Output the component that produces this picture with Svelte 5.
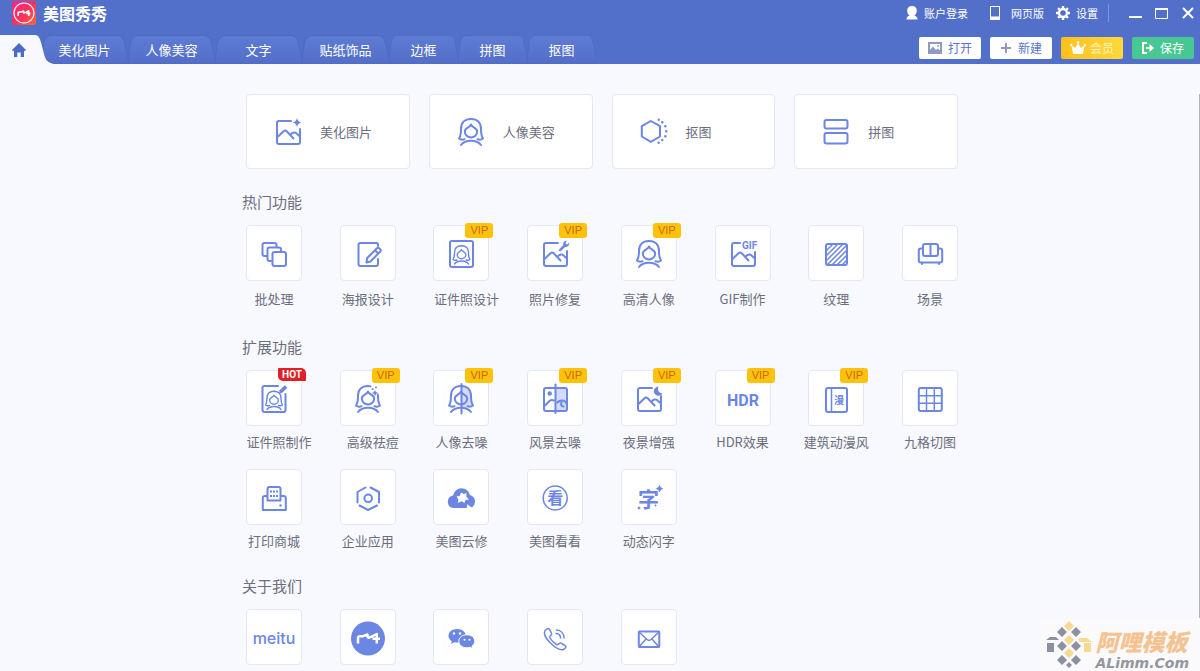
<script>
  const tabs = [
    { label: '美化图片', wide: true },
    { label: '人像美容', wide: true },
    { label: '文字', wide: true },
    { label: '贴纸饰品', wide: true },
    { label: '边框' },
    { label: '拼图' },
    { label: '抠图' }
  ];

  const cards = [
    { label: '美化图片', icon: 'beautify' },
    { label: '人像美容', icon: 'portrait' },
    { label: '抠图', icon: 'cutout' },
    { label: '拼图', icon: 'collage' }
  ];

  const sections = [
    {
      title: '热门功能',
      kind: 'hot',
      items: [
        { label: '批处理', icon: 'batch' },
        { label: '海报设计', icon: 'poster' },
        { label: '证件照设计', icon: 'idphoto', badge: 'VIP', trailing: true },
        { label: '照片修复', icon: 'repair', badge: 'VIP' },
        { label: '高清人像', icon: 'portrait', badge: 'VIP' },
        { label: 'GIF制作', icon: 'gif' },
        { label: '纹理', icon: 'texture' },
        { label: '场景', icon: 'sofa' }
      ]
    },
    {
      title: '扩展功能',
      kind: 'more',
      items: [
        { label: '证件照制作', icon: 'idmake', badge: 'HOT', trailing: true },
        { label: '高级祛痘', icon: 'acne', badge: 'VIP', trailing: true },
        { label: '人像去噪', icon: 'denoise', badge: 'VIP' },
        { label: '风景去噪', icon: 'scenery', badge: 'VIP' },
        { label: '夜景增强', icon: 'night', badge: 'VIP' },
        { label: 'HDR效果', icon: 'hdr', badge: 'VIP' },
        { label: '建筑动漫风', icon: 'comic', badge: 'VIP' },
        { label: '九格切图', icon: 'grid' },
        { label: '打印商城', icon: 'printer' },
        { label: '企业应用', icon: 'company' },
        { label: '美图云修', icon: 'cloud' },
        { label: '美图看看', icon: 'kankan' },
        { label: '动态闪字', icon: 'flash' }
      ]
    }
  ];

  const about = ['meitu', 'logo', 'wechat', 'phone', 'mail'];

  // shapes shared by several icons
  const hairLeft = 'M16 4C9.500 4 6 8 6 14C6 19 5.800 21 4 23.500C5.500 24.700 7.500 24.900 9.500 24.300';
  const hairRight = 'M16 4C22.500 4 26 8 26 14C26 19 26.200 21 28 23.500C26.500 24.700 24.500 24.900 22.500 24.300';
  const face = 'M16 9.500C15.500 12.500 9.800 12.500 9.800 16.500C9.800 20 12.700 22.500 16 22.500C19.300 22.500 22.200 20 22.200 16.500C22.200 12.500 16.500 12.500 16 9.500Z';
  const shoulders = 'M6 30C8 27.300 12 25.800 16 25.800C20 25.800 24 27.300 26 30';
  const hills = 'M5 22.500L11.500 16.200C12.600 15.200 13.700 15.200 14.700 16.200L21.500 23.500M18.500 19.800C20.500 17 23.500 16.800 25 18.800C26 20 26.500 21 27.700 21';
  const frame = 'M19 6H7Q5 6 5 8V27Q5 29 7 29H26Q28 29 28 27V14';
  const mark = 'M6 22.500V17Q6 15.200 7.800 15.200H11L15.500 13.500V15.500Q15.500 17 17 16.500L20 15.500L24.800 13V22.500M20.500 17.800H28';
</script>

{#snippet icon(name)}
  <svg class="icon" width="32" height="32" viewBox="0 0 32 32" aria-hidden="true">
    {#if name === 'beautify'}
      <path d={frame} />
      <path d={hills} />
      <path class="solid" d="M25 3Q25.800 6.700 29.500 7.500Q25.800 8.300 25 12Q24.200 8.300 20.500 7.500Q24.200 6.700 25 3Z" />
    {:else if name === 'portrait'}
      <path d={hairLeft} />
      <path d={hairRight} />
      <path d={face} />
      <path d={shoulders} />
    {:else if name === 'cutout'}
      <path d="M12.800 6L22 11.200V21.500L12.800 26.800L3.800 21.500V11.200Z" />
      {#each [[20.7, 4.7], [24.3, 7.3], [27.3, 11.2], [28.2, 16.2], [27.3, 21.2], [24.3, 25], [20.7, 27.7]] as [x, y]}
        <circle class="solid" cx={x} cy={y} r="1.200" />
      {/each}
    {:else if name === 'collage'}
      <rect x="4.500" y="5" width="23" height="8.500" rx="2" />
      <rect x="4.500" y="18" width="23" height="10.500" rx="2" />
    {:else if name === 'batch'}
      <path d="M9 19H6.500Q4.500 19 4.500 17V8Q4.500 6 6.500 6H16.500Q18.500 6 18.500 8V10" />
      <path d="M14 24H11.500Q9.500 24 9.500 22V12.500Q9.500 10.500 11.500 10.500H21Q23 10.500 23 12.500V14.500" />
      <rect x="14.500" y="15" width="13.500" height="14" rx="2" />
    {:else if name === 'poster'}
      <path d="M26 9V7.500Q26 6 24.500 6H8.500Q6.500 6 6.500 8V27Q6.500 29 8.500 29H24Q26 29 26 27V22" />
      <path d="M14.500 25.500L15.200 21L25 11.200Q26.200 10.200 27.500 11.400L28.200 12.200Q29.300 13.400 28.200 14.600L18.500 24.500ZM23 13.200L26.300 16.500" />
    {:else if name === 'idphoto'}
      <rect x="5" y="4" width="23" height="26" rx="2" />
      <g transform="translate(5.300 6) scale(.7)">
        <path d={hairLeft} />
        <path d={hairRight} />
        <path d={face} />
        <path d={shoulders} />
      </g>
    {:else if name === 'repair'}
      <path d={frame} />
      <path d={hills} />
      <path class="solid" d="M20 12.500L24.300 8C23.700 6 25.300 3.800 27.600 3.500L26.500 6.500L28 7.600L30.300 5.800C30.500 8.500 28.200 10.600 26 10L22 14C20.600 14.700 19.300 13.600 20 12.500Z" />
    {:else if name === 'gif'}
      <path d="M13 6H7Q5 6 5 8V27Q5 29 7 29H26Q28 29 28 27V15" />
      <path d={hills} />
      <text class="gif" x="15" y="12">GIF</text>
    {:else if name === 'texture'}
      <rect x="6" y="7" width="21" height="21" rx="2" />
      <path class="thin" d="M7 13L12 8M7 18L17 8M7 23L22 8M7 28L27 8M12 28L27 13M17 28L27 18M22 28L27 23" />
    {:else if name === 'sofa'}
      <rect x="9" y="7" width="15" height="12" rx="2" />
      <path d="M16.500 7V19M9 11.500H7Q4.800 11.500 4.800 13.700V23.500Q4.800 25.500 6.800 25.500H26.200Q28.200 25.500 28.200 23.500V13.700Q28.200 11.500 26 11.500H24M8 25.500V27M25 25.500V27" />
    {:else if name === 'idmake'}
      <path d="M20 4H6.500Q4.500 4 4.500 6V28Q4.500 30 6.500 30H25.500Q27.500 30 27.500 28V12" />
      <path class="solid" d="M21 11.500L21.600 8.300L26.800 3.300L29.300 5.700L24.200 10.800Z" />
      <g transform="translate(4.800 6.500) scale(.7)">
        <path d={hairLeft} />
        <path d={hairRight} />
        <path d={face} />
        <path d={shoulders} />
      </g>
    {:else if name === 'acne'}
      <path d={hairLeft} />
      <path d="M16 4Q17.500 4 18.500 4.400M25.800 12.500Q26 13.300 26 14C26 19 26.200 21 28 23.500C26.500 24.700 24.500 24.900 22.500 24.300" />
      <path d={face} />
      <path d={shoulders} />
      <path class="solid" d="M23 8Q23.500 10.500 26 11Q23.500 11.500 23 14Q22.500 11.500 20 11Q22.500 10.500 23 8Z" />
      <circle class="solid" cx="20.500" cy="7" r="1" />
      <circle class="solid" cx="24" cy="5.500" r="1" />
    {:else if name === 'denoise'}
      <path class="tint" d="M16 4C23 4 26 9 26 14C26 19 26.200 21 28 23.500L22 25L26 30L16 26Z" />
      <path d={hairLeft} />
      <path d={hairRight} />
      <path d={face} />
      <path d={shoulders} />
      <path d="M16.500 2V31.500" />
    {:else if name === 'scenery'}
      <path class="tint" d="M16.500 6H26Q28 6 28 8V27Q28 29 26 29H16.500Z" />
      <rect x="5" y="6" width="23" height="23" rx="2" />
      <circle class="solid" cx="10.700" cy="11.500" r="2.200" />
      <path d="M5 24.500L10.500 19Q12.500 17.500 15 18.500M28 22.500C26.500 17.500 21 17.500 18.500 20.500M22.500 20.500Q21 24 24.500 24.500" />
      <path d="M16.500 2.500V31" />
    {:else if name === 'night'}
      <path d={frame} />
      <path d={hills} />
      <path class="solid" d="M25.500 4.500C24 8 25.800 11.200 29.500 11.500C28 14.200 23.800 14.600 21.800 12C19.600 9 21.500 5 25.500 4.500Z" />
    {:else if name === 'hdr'}
      <text class="hdr" x="16" y="24" text-anchor="middle">HDR</text>
    {:else if name === 'comic'}
      <rect x="6" y="6" width="21" height="24" rx="2" />
      <path class="thin" d="M11.500 6V30" />
      <text class="comic" x="19" y="22" text-anchor="middle">漫</text>
    {:else if name === 'grid'}
      <rect x="4.800" y="6" width="23" height="23" rx="2" />
      <path class="thin" d="M12.500 6V29M20.300 6V29M5 13.700H28M5 21.300H28" />
    {:else if name === 'printer'}
      <path d="M9.500 19.500V8Q9.500 6 11.500 6H20.500Q22.500 6 22.500 8V19.500ZM9.500 15H7Q4.800 15 4.800 17V29H27.800V17Q27.800 15 25.500 15H22.500" />
      <path class="dash" d="M12 10.500H20.500M12 15H20.500" />
      <circle class="solid" cx="22.500" cy="24.500" r="1.200" />
    {:else if name === 'company'}
      <path d="M13.500 6.500L5.500 11V21.500M18.500 6.500L27 11V21.500M7.500 24.500L16 29L25 24.500" />
      <circle cx="16.200" cy="17.300" r="3.800" />
    {:else if name === 'cloud'}
      <path class="solid" d="M8.500 27Q2.800 26.500 2.800 20.700Q3 15.500 8 14.500Q10 7.500 16.500 7.300Q23 7.500 25 14Q30 15.500 30 20.500Q30 24 27 26.500Q24.500 25.500 22.500 23L21.500 27Z" />
      <path class="white" d="M16 11.500L19 13L21.500 12L21.300 15.500L24 18.500L20.500 19L19.500 22L16.800 20.300L13 21.800L13.300 18.300L11.500 15.500L14.800 14.800Z" />
    {:else if name === 'kankan'}
      <circle class="thin" cx="16.200" cy="17" r="12" />
      <text class="kankan" x="16.200" y="23" text-anchor="middle">看</text>
    {:else if name === 'flash'}
      <text class="flash" x="15.500" y="26" text-anchor="middle">字</text>
      <path class="solid" d="M26.500 4Q27.300 6.900 30.200 7.700Q27.300 8.500 26.500 11.400Q25.700 8.500 22.800 7.700Q25.700 6.900 26.500 4ZM6 25Q6.400 26.600 8 27Q6.400 27.400 6 29Q5.600 27.400 4 27Q5.600 26.600 6 25ZM22.500 23Q22.800 24.200 24 24.500Q22.800 24.800 22.500 26Q22.200 24.800 21 24.500Q22.200 24.200 22.500 23Z" />
    {:else if name === 'meitu'}
      <text class="meitu" x="16" y="23" text-anchor="middle">meitu</text>
    {:else if name === 'logo'}
      <circle class="solid" cx="16" cy="17.500" r="17" />
      <path class="stroke-white" d={mark} />
    {:else if name === 'wechat'}
      <path class="solid" d="M12 8C6.800 8 3.500 11 3.500 14.700C3.500 17 4.600 18.800 6.700 20.200L6.200 23L9.200 21.200Q10.500 21.600 12.500 21.600C17.500 21.600 20.700 18.500 20.700 14.700C20.700 11 17.200 8 12 8Z" />
      <path class="bubble" d="M22 13.700C17.200 13.700 13.800 16.500 13.800 20.200C13.800 24 17.200 26.700 21.800 26.700Q23.600 26.700 25 26.200L27.500 27.700L27 25.200C28.700 24 29.700 22.300 29.700 20.200C29.700 16.500 26.500 13.700 22 13.700Z" />
      <circle class="white" cx="9" cy="12.500" r="1.200" />
      <circle class="white" cx="15" cy="12.500" r="1.200" />
      <circle class="white" cx="19.500" cy="18.700" r="1" />
      <circle class="white" cx="24.500" cy="18.700" r="1" />
    {:else if name === 'phone'}
      <path class="thin" d="M6 9.500L8.200 7.800Q9.500 7 10.500 8.300L12.500 12Q13 13.200 12 14.200L11 15.200Q10.500 16 11 17C12.700 20 14.700 22 17.500 23.500Q18.500 23.900 19.300 23.200L20.500 22.300Q21.500 21.700 22.500 22.300L26 24.500Q27.500 25.500 26.500 26.800L25 28.300C19 31 2.500 16.500 6 9.500ZM17.500 9C22 9.200 25 12.500 25 17M17 12.500C19.800 12.700 21.500 14.500 21.500 17" />
    {:else if name === 'mail'}
      <rect x="5.800" y="10.500" width="20.500" height="15.500" rx="1" />
      <path class="thin" d="M6 11L14 18.500Q16 20.200 18 18.500L26 11M6 26L13 18M26 26L19 18" />
    {/if}
  </svg>
{/snippet}

{#snippet tile(item)}
  <button class="tile" aria-label={item.label}>
    {@render icon(item.icon)}
    {#if item.badge}
      <span class="badge" class:hot={item.badge === 'HOT'}>{item.badge}</span>
    {/if}
  </button>
{/snippet}

<div class="app">
  <header>
    <div class="titlebar">
      <div class="brand">
        <svg width="24" height="24" viewBox="0 0 24 24" aria-hidden="true">
          <defs>
            <linearGradient id="brandFill" x1="0" y1="0" x2="1" y2="1">
              <stop offset="0" stop-color="#f5288c" />
              <stop offset=".5" stop-color="#fb2f5c" />
              <stop offset="1" stop-color="#ff6a3c" />
            </linearGradient>
          </defs>
          <rect width="24" height="24" rx="3" fill="url(#brandFill)" />
          <circle cx="12" cy="12" r="10" fill="none" stroke="#fff" stroke-width="1.200" />
          <path transform="translate(2.800 2.500) scale(.56)" d={mark} fill="none" stroke="#fff" stroke-width="3" stroke-linejoin="round" />
        </svg>
        <strong>美图秀秀</strong>
      </div>

      <nav class="account">
        <button class="plain login">
          <svg width="12" height="14" viewBox="0 0 12 14" aria-hidden="true">
            <path fill="#fff" d="M6 0C9 0 10.800 2 10.800 4.800C10.800 7 9.800 8.700 8.300 9.500Q11.500 10.300 11.500 13.500H.5Q.5 10.300 3.700 9.500C2.200 8.700 1.200 7 1.200 4.800C1.200 2 3 0 6 0Z" />
          </svg>
          账户登录
        </button>
        <button class="plain web">
          <svg width="10" height="14" viewBox="0 0 10 14" aria-hidden="true">
            <path fill="#fff" fill-rule="evenodd" d="M0 0H10V14H0ZM1 1V10.500H9V1Z" />
          </svg>
          网页版
        </button>
        <button class="plain">
          <svg width="14" height="14" viewBox="0 0 14 14" aria-hidden="true">
            <circle cx="7" cy="7" r="4" fill="none" stroke="#fff" stroke-width="2.400" />
            <path stroke="#fff" stroke-width="2.400" d="M7 0V2M7 12V14M0 7H2M12 7H14M2.050 2.050L3.500 3.500M10.500 10.500L11.950 11.950M2.050 11.950L3.500 10.500M10.500 3.500L11.950 2.050" />
          </svg>
          设置
        </button>
        <span class="divider"></span>
        <div class="window">
          <button class="plain" aria-label="最小化">
            <svg width="14" height="14" viewBox="0 0 14 14"><path d="M0 11H13" stroke="#fff" stroke-width="2" /></svg>
          </button>
          <button class="plain" aria-label="最大化">
            <svg width="14" height="14" viewBox="0 0 14 14"><path d="M.5 3V12.500H12.500V3Z" fill="none" stroke="#fff" /><path d="M0 3H13" stroke="#fff" stroke-width="2" /></svg>
          </button>
          <button class="plain" aria-label="关闭">
            <svg width="14" height="14" viewBox="0 0 14 14"><path d="M2 2L12 12M12 2L2 12" stroke="#fff" stroke-width="2" /></svg>
          </button>
        </div>
      </nav>
    </div>

    <div class="toolbar">
      <nav class="tabs">
        <button class="home" aria-label="首页" aria-current="page">
          <svg class="shape" viewBox="0 0 54 29" preserveAspectRatio="none" aria-hidden="true">
            <path fill="#f8f9fe" d="M0 0H35C39 0 40 4 41.500 9L44 19C45.500 25 48 28 54 29H0Z" />
          </svg>
          <svg class="house" width="14" height="14" viewBox="0 0 14 14" aria-hidden="true">
            <path fill="#4c6ac6" d="M7 0L14 7L13 8.200L12 7.500V14H8.700V9.500H5.300V14H2V7.500L1 8.200L0 7Z" />
          </svg>
        </button>
        {#each tabs as tab}
          <button class="tab" class:wide={tab.wide}>
            <svg class="shape" viewBox="0 0 86 29" preserveAspectRatio="none" aria-hidden="true">
              <defs>
                <linearGradient id="tabFill" x1="0" y1="0" x2="0" y2="1">
                  <stop offset="0" stop-color="#5f7cd5" />
                  <stop offset="1" stop-color="#526ec7" />
                </linearGradient>
              </defs>
              <path fill="url(#tabFill)" stroke="#4f6bc2" stroke-width="1" d="M0 29Q1 17 2.500 8Q4 1 10 .5H76Q81 1 82.500 8L85 19Q86 25 88 29Z" />
            </svg>
            <span>{tab.label}</span>
          </button>
        {/each}
      </nav>

      <div class="actions">
        <button class="action">
          <svg width="14" height="12" viewBox="0 0 14 12" aria-hidden="true">
            <rect x="1" y="1" width="12" height="10" fill="none" stroke="#8f9ac0" stroke-width="2" />
            <path fill="#8f9ac0" d="M2 10V8L5 4.500L8 8L10 6.500L12 8.500V10Z" />
            <circle cx="10" cy="4" r="1" fill="#8f9ac0" />
          </svg>
          打开
        </button>
        <button class="action">
          <svg width="12" height="12" viewBox="0 0 12 12" aria-hidden="true">
            <path d="M6 1V11M1 6H11" stroke="#8f9ac0" stroke-width="2" />
          </svg>
          新建
        </button>
        <button class="action vip">
          <svg width="16" height="14" viewBox="0 0 16 14" aria-hidden="true">
            <path fill="#fff" d="M1.500 4.500L5 7L8 2L11 7L14.500 4.500L13 13H3Z" />
            <circle cx="8" cy="1.500" r="1.300" fill="#fff" />
            <circle cx="1.200" cy="4" r="1.200" fill="#fff" />
            <circle cx="14.800" cy="4" r="1.200" fill="#fff" />
          </svg>
          会员
        </button>
        <button class="action save">
          <svg width="12" height="12" viewBox="0 0 12 12" aria-hidden="true">
            <path fill="none" stroke="#fff" stroke-width="2" d="M5 1H1V11H5" />
            <path fill="#fff" d="M4 5H7.500V2L12 6L7.500 10V7H4Z" />
          </svg>
          保存
        </button>
      </div>
    </div>
  </header>

  <main>
    <div class="cards">
      {#each cards as card}
        <button class="card">
          {@render icon(card.icon)}
          <span>{card.label}</span>
        </button>
      {/each}
    </div>

    {#each sections as section}
      <section class={section.kind}>
        <h2>{section.title}</h2>
        <div class="tiles">
          {#each section.items as item}
            <div class="cell">
              {@render tile(item)}
              <span class="label" class:trailing={item.trailing}>{item.label}</span>
            </div>
          {/each}
        </div>
      </section>
    {/each}

    <section>
      <h2>关于我们</h2>
      <div class="tiles">
        {#each about as name}
          {@render tile({ label: name, icon: name })}
        {/each}
      </div>
    </section>
  </main>

  <span class="scroll"></span>

  <div class="watermark">
    <svg width="48" height="50" viewBox="0 0 48 50" aria-hidden="true">
      <g fill="#f8d98f">
        <path d="M24 1L29 6L24 11L19 6ZM24 15L29 20L24 25L19 20ZM24 28L29 33L24 38L19 33Z" />
        <path d="M34 18H42L47 22H34ZM39 23H46V32H39Z" />
      </g>
      <g fill="#8c919f">
        <path d="M17 7L22 12L17 17L12 12ZM31 7L36 12L31 17L26 12ZM17 21L22 26L17 31L12 26ZM31 21L36 26L31 31L26 26ZM17 35L22 40L17 45L12 40ZM31 35L36 40L31 45L26 40ZM24 42L27 45L24 48L21 45Z" />
        <path d="M1 20L5 17H11L14 20ZM2 23H9V32H2Z" />
      </g>
    </svg>
    <div class="mark-text">
      <b>阿哩模板</b>
      <i>ALimm.Com</i>
    </div>
  </div>
</div>

<style>
  :global(body) {
    margin: 0;
    background: #f8f9fe;
  }

  .app {
    position: relative;
    min-height: 100vh;
    box-sizing: border-box;
    overflow: hidden;
    font-family: "Noto Sans CJK SC", sans-serif;
    font-size: 13px;
    color: #6b6e7d;
  }

  button {
    margin: 0;
    padding: 0;
    border: 0;
    background: none;
    font: inherit;
    color: inherit;
    cursor: pointer;
  }

  svg {
    display: block;
    flex: none;
  }

  header {
    background: #5270ca;
    color: #fff;
  }

  .titlebar {
    display: flex;
    justify-content: space-between;
    align-items: center;
    height: 26px;
    padding: 0 5px 0 12px;
  }

  .brand {
    display: flex;
    align-items: center;
    gap: 7px;
    font-size: 16px;
    line-height: 24px;
  }

  .account {
    display: flex;
    align-items: center;
    font-size: 11px;
    line-height: 24px;
  }

  .plain {
    display: flex;
    align-items: center;
    gap: 6px;
    margin-right: 10px;
  }

  .login {
    margin-right: 22px;
  }

  .web {
    gap: 11px;
    margin-right: 12px;
  }

  .divider {
    width: 1px;
    height: 18px;
    margin-right: 20px;
    background: #7d95dc;
  }

  .window {
    display: flex;
    gap: 12px;
  }

  .window .plain {
    margin: 0;
  }

  .toolbar {
    display: flex;
    justify-content: space-between;
    margin-top: 9px;
    height: 29px;
    padding-right: 6px;
  }

  .tabs {
    display: flex;
  }

  .home,
  .tab {
    position: relative;
    height: 29px;
  }

  .home {
    z-index: 1;
    width: 41px;
    padding-left: 12px;
  }

  .home .shape {
    width: 54px;
  }

  .house {
    position: relative;
  }

  .tab {
    width: 69px;
  }

  .tab.wide {
    width: 87px;
  }

  .tab span {
    position: relative;
    display: block;
    line-height: 26px;
  }

  .shape {
    position: absolute;
    left: 0;
    top: 0;
    width: 100%;
    height: 29px;
  }

  .actions {
    display: flex;
    gap: 9px;
    padding-top: 2px;
  }

  .action {
    display: flex;
    align-items: center;
    justify-content: center;
    gap: 6px;
    width: 62px;
    height: 22px;
    border-radius: 2px;
    background: #fff;
    font-size: 12px;
    line-height: 20px;
    color: #5a73cf;
  }

  .action.vip {
    gap: 4px;
    background: linear-gradient(90deg, #ffc01a, #ffd83c);
    color: #fff3c4;
  }

  .action.save {
    background: #48c792;
    color: #fff;
  }

  main {
    max-width: 716px;
    margin: 0 auto;
    padding: 30px 0 5px;
  }

  .cards {
    display: grid;
    grid-template-columns: repeat(4, 1fr);
    gap: 19px;
    padding-left: 4px;
    margin-bottom: 21px;
  }

  .card {
    display: flex;
    align-items: center;
    gap: 16px;
    height: 75px;
    padding-left: 25px;
  }

  .card .icon {
    margin-bottom: 2px;
  }

  .card,
  .tile {
    border: 1px solid #e4e6fa;
    border-radius: 4px;
    background: #fff;
  }

  h2 {
    margin: 0 0 11px;
    font-size: 15px;
    font-weight: 400;
    line-height: 24px;
  }

  .tiles {
    display: grid;
    grid-template-columns: repeat(8, 56px);
    justify-content: space-between;
    row-gap: 17px;
    padding-left: 4px;
  }

  .cell {
    display: flex;
    flex-direction: column;
    align-items: center;
  }

  .tile {
    position: relative;
    display: flex;
    align-items: center;
    justify-content: center;
    width: 56px;
    height: 56px;
  }

  .label {
    margin-top: 6px;
    line-height: 20px;
    white-space: nowrap;
  }

  .hot .label {
    margin-top: 8px;
  }

  .label.trailing {
    padding-left: 10px;
  }

  .hot {
    margin-bottom: 26px;
  }

  .more {
    margin-bottom: 23px;
  }

  .badge {
    position: absolute;
    top: -3px;
    right: -5px;
    width: 28px;
    border-radius: 3px;
    background: #ffc20a;
    font-family: "Liberation Sans", sans-serif;
    font-size: 11px;
    line-height: 15px;
    text-align: center;
    color: #c46a14;
  }

  .badge.hot {
    border-radius: 1px 5px 1px 5px;
    background: #e02026;
    font-family: Roboto, sans-serif;
    font-size: 10px;
    font-weight: 700;
    line-height: 13px;
    color: #fff;
  }

  .icon {
    overflow: visible;
    fill: none;
    stroke: #6c86e4;
    stroke-width: 2;
    stroke-linecap: round;
    stroke-linejoin: round;
  }

  .icon .thin {
    stroke-width: 1.500;
  }

  .icon .dash {
    stroke-linecap: butt;
    stroke-dasharray: 2 1;
  }

  .icon .solid {
    fill: #6c86e4;
    stroke: none;
  }

  .icon .tint {
    fill: #d3dcfa;
    stroke: none;
  }

  .icon .white {
    fill: #fff;
    stroke: none;
  }

  .icon .bubble {
    fill: #6c86e4;
    stroke: #fff;
    stroke-width: 1;
  }

  .icon .stroke-white {
    stroke: #fff;
    stroke-linecap: butt;
    stroke-width: 2.500;
  }

  .icon text {
    fill: #6c86e4;
    stroke: none;
    font-weight: 700;
  }

  .gif {
    font-family: Roboto, sans-serif;
    font-size: 10px;
  }

  .hdr {
    font-family: Roboto, sans-serif;
    font-size: 16px;
  }

  .comic {
    font-size: 10px;
  }

  .kankan {
    font-size: 16px;
  }

  .flash {
    font-size: 21px;
  }

  .icon .meitu {
    font-family: Inter, sans-serif;
    font-size: 16px;
    font-weight: 500;
  }

  .scroll {
    position: absolute;
    top: 94px;
    right: 0;
    bottom: 53px;
    width: 1px;
    background: #b4b6bf;
  }

  .watermark {
    position: absolute;
    right: 0;
    bottom: 0;
    display: flex;
    align-items: center;
    gap: 2px;
    padding: 1px 11px 1px 5px;
    background: #fafafc;
  }

  .mark-text {
    display: flex;
    flex-direction: column;
    padding-top: 6px;
    font-style: italic;
    font-weight: 700;
  }

  .mark-text b {
    font-size: 23px;
    line-height: 30px;
    color: #f4c391;
  }

  .mark-text i {
    font-family: "DejaVu Sans", sans-serif;
    font-size: 14px;
    line-height: 14px;
    color: #94969f;
  }
</style>
